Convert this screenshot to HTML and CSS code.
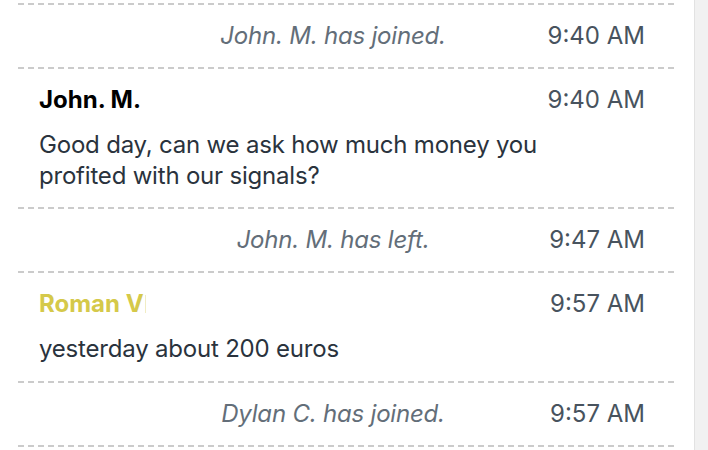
FILE: index.html
```html
<!DOCTYPE html>
<html lang="en">
<head>
    <meta charset="UTF-8">
    <meta name="viewport" content="width=device-width, initial-scale=1.0">
    <title>Chat Log</title>
    <link rel="stylesheet" href="styles.css">
</head>
<body>
    <div class="window">
        <!-- Message List -->
        <div class="chat-log">
            <div class="row system">
                <div class="sys-text">John. M. has joined.</div>
                <div class="time">9:40 AM</div>
            </div>

            <div class="row message">
                <div class="msg-main">
                    <div class="name">John. M.</div>
                    <div class="text">Good day, can we ask how much money you profited with our signals?</div>
                </div>
                <div class="time">9:40 AM</div>
            </div>

            <div class="row system">
                <div class="sys-text">John. M. has left.</div>
                <div class="time">9:47 AM</div>
            </div>

            <div class="row message">
                <div class="msg-main">
                    <div class="name name-yellow">Roman V</div>
                    <div class="text">yesterday about 200 euros</div>
                </div>
                <div class="time">9:57 AM</div>
            </div>

            <div class="row system last">
                <div class="sys-text">Dylan C. has joined.</div>
                <div class="time">9:57 AM</div>
            </div>
        </div>

        <!-- Scrollbar Track -->
        <div class="scroll-track"></div>
    </div>
</body>
</html>
```

FILE: styles.css
```css
body {
    margin: 0;
    font-family: Inter, "Noto Sans", sans-serif;
    background-color: #fff;
    overflow: hidden;
}

.window {
    display: flex;
    height: 450px;
}

/* Message List */
.chat-log {
    flex: 1;
    padding: 3px 20px 0 18px;
}

.row {
    display: flex;
    align-items: flex-start;
    border-top: 2px dashed #cbcbcb;
    padding: 15px 29px 16px 21px;
    font-size: 24px;
    line-height: 31px;
}

.row.last {
    border-bottom: 2px dashed #cbcbcb;
}

.time {
    width: 98px;
    flex-shrink: 0;
    text-align: right;
    color: #48535e;
}

/* System Lines */
.sys-text {
    flex: 1;
    text-align: center;
    padding-left: 80px;
    font-style: italic;
    letter-spacing: -0.2px;
    color: #636e79;
}

/* Chat Messages */
.msg-main {
    flex: 1;
    display: flex;
    flex-direction: column;
    gap: 15px;
}

.name {
    font-weight: bold;
    color: #000;
}

.name-yellow {
    color: #d5c94a;
}

.name-yellow::after {
    content: "";
    display: inline-block;
    width: 1px;
    height: 18px;
    margin-left: 1px;
    background-color: #f1edc4;
    vertical-align: -1px;
}

.text {
    color: #2a333d;
    line-height: 30.5px;
    letter-spacing: -0.2px;
}

/* Scrollbar Track */
.scroll-track {
    width: 13px;
    background-color: #f1f1f1;
    border-left: 1px solid #e2e2e2;
}
```
